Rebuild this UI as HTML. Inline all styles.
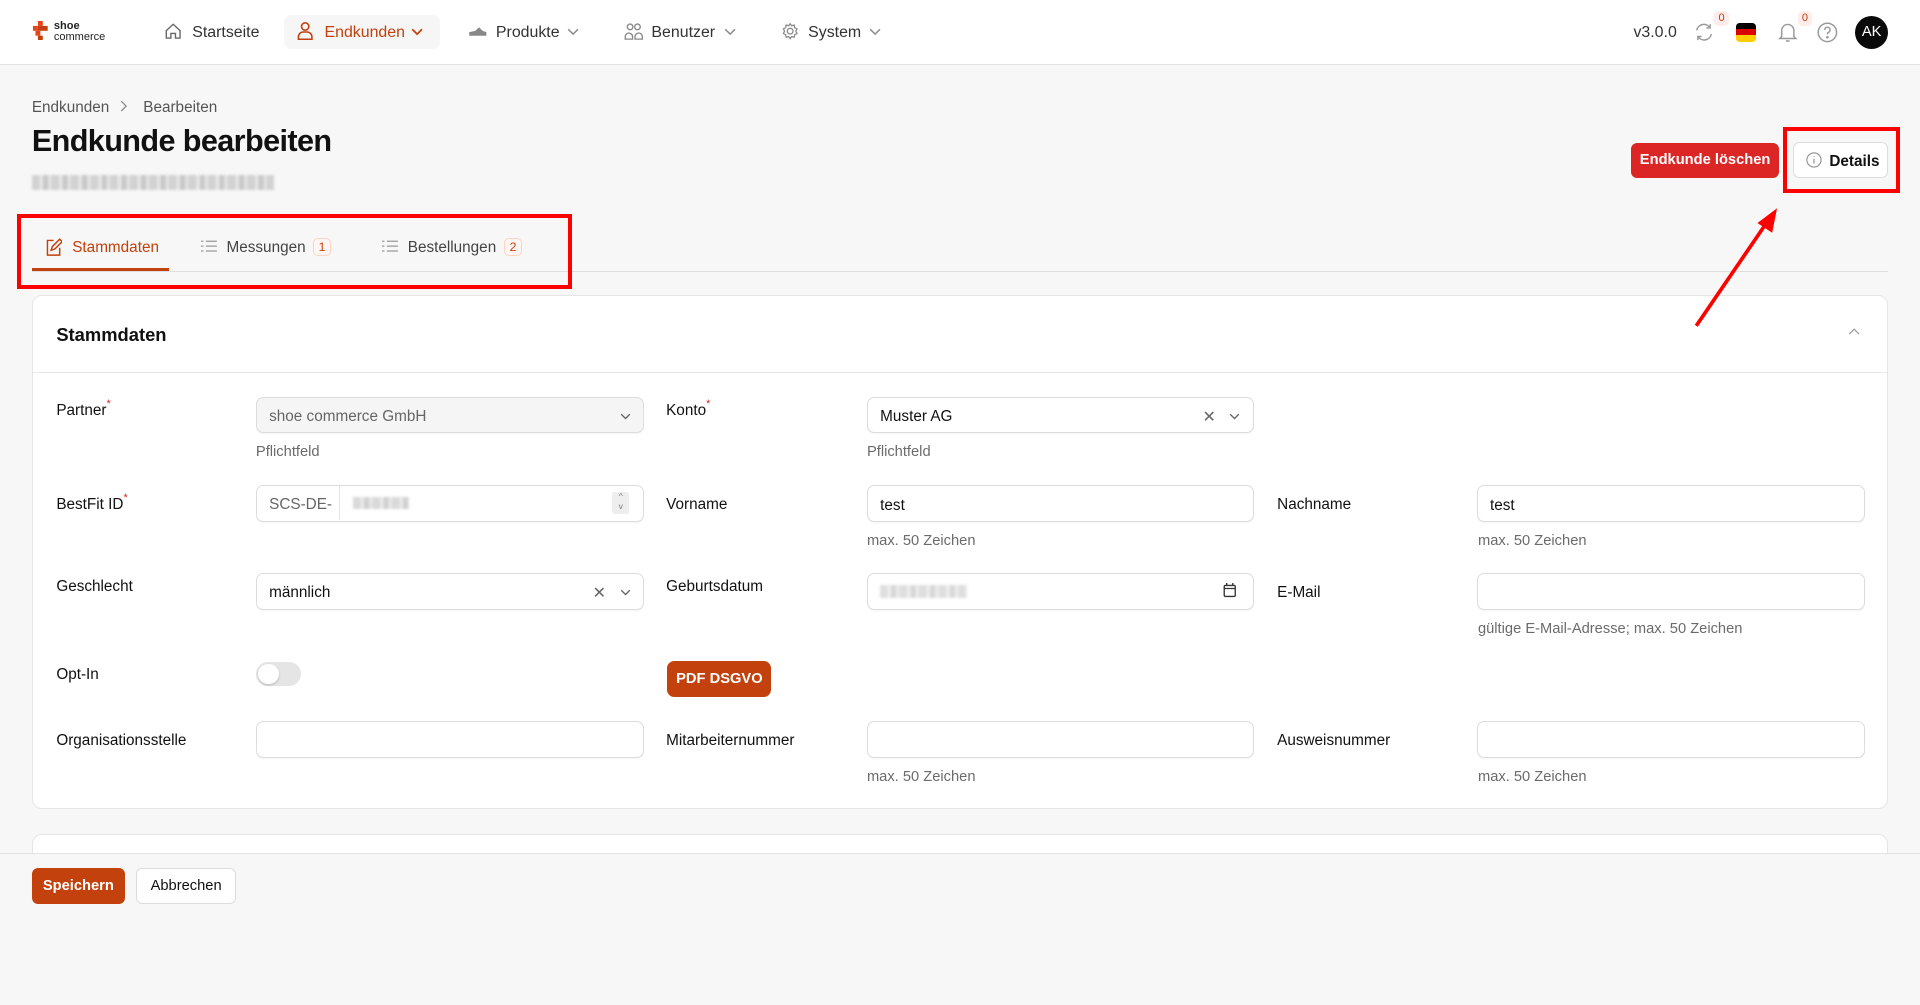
<!DOCTYPE html>
<html><head><meta charset="utf-8">
<style>
html,body{margin:0;padding:0;width:1920px;height:1005px;overflow:hidden;background:#f7f7f7;}
#r{zoom:1.22449;position:relative;width:1568px;height:821px;font-family:"Liberation Sans",sans-serif;color:#111;font-size:13px;}
.a{position:absolute;}
.hdr{left:0;top:0;width:1568px;height:52px;background:#fff;border-bottom:1px solid #e3e3e3;}
.nav{top:20px;font-size:13px;color:#333;}
.lbl{font-size:12.5px;color:#111;}
.req:after{content:"*";color:#dc2626;font-size:9px;vertical-align:top;position:relative;top:-3px;}
.inp{background:#fff;border:1px solid #dcdcdc;border-radius:6px;height:29px;box-sizing:border-box;box-shadow:0 1px 1px rgba(0,0,0,.03);}
.v{position:absolute;left:10px;top:8px;font-size:12.5px;color:#111;}
.help{font-size:12px;color:#6b6b6b;}
.btn{display:flex;align-items:center;justify-content:center;box-sizing:border-box;}
.blur{background:repeating-linear-gradient(90deg,#c9c9c9 0 6px,#e2e2e2 6px 9px,#bdbdbd 9px 13px,#ddd 13px 16px);filter:blur(1px);}
</style></head><body><div id="r">
<div class="a hdr"></div>
<svg class="a" style="left:27px;top:17px" width="14" height="16" viewBox="0 0 14 16"><rect x="4" y="0" width="4" height="4" fill="#e8431b"/><rect x="0" y="4" width="4" height="4" fill="#e8431b"/><rect x="4" y="4" width="8" height="4" fill="#c2410c"/><rect x="2" y="8" width="4" height="4" fill="#e8431b"/><rect x="4" y="12" width="4" height="4" fill="#c2410c"/></svg>
<div class="a" style="left:44px;top:17px;font-size:9px;line-height:9px;color:#222"><b>shoe</b><br>commerce</div>
<svg class="a" style="left:134px;top:18px" width="15" height="15" viewBox="0 0 16 16" fill="none" stroke="#666" stroke-width="1.2"><path d="M2 7.5L8 2l6 5.5V14H10V10H6v4H2z"/></svg>
<div class="a nav" style="left:157px">Startseite</div>
<div class="a" style="left:232px;top:12px;width:127px;height:28px;background:#f6f6f6;border-radius:6px"></div>
<svg class="a" style="left:242px;top:17px" width="15" height="16" viewBox="0 0 15 16" fill="none" stroke="#c2410c" stroke-width="1.3"><circle cx="7.5" cy="4.5" r="3"/><path d="M2 15v-2a4 4 0 0 1 4-4h3a4 4 0 0 1 4 4v2z"/></svg>
<div class="a nav" style="left:265px;color:#c2410c">Endkunden</div>
<svg class="a" style="left:336px;top:23px" width="10" height="7" viewBox="0 0 10 7" fill="none" stroke="#c2410c" stroke-width="1.4"><path d="M1 1l4 4 4-4"/></svg>
<svg class="a" style="left:382px;top:21px" width="16" height="9" viewBox="0 0 16 9"><path d="M1 8V5l5-1 3-3 3 3 3 1v3z" fill="#888"/></svg>
<div class="a nav" style="left:405px">Produkte</div>
<svg class="a" style="left:463px;top:23px" width="10" height="7" viewBox="0 0 10 7" fill="none" stroke="#888" stroke-width="1.2"><path d="M1 1l4 4 4-4"/></svg>
<svg class="a" style="left:510px;top:18px" width="16" height="16" viewBox="0 0 16 16" fill="none" stroke="#888" stroke-width="1.1"><circle cx="5" cy="4" r="2.3"/><circle cx="11" cy="4" r="2.3"/><path d="M1 14v-2a3 3 0 0 1 6 0v2zM9 14v-2a3 3 0 0 1 6 0v2z"/></svg>
<div class="a nav" style="left:532px">Benutzer</div>
<svg class="a" style="left:591px;top:23px" width="10" height="7" viewBox="0 0 10 7" fill="none" stroke="#888" stroke-width="1.2"><path d="M1 1l4 4 4-4"/></svg>
<svg class="a" style="left:638px;top:18px" width="15" height="15" viewBox="0 0 16 16" fill="none" stroke="#888" stroke-width="1.1"><circle cx="8" cy="8" r="2.5"/><path d="M8 1.5l1.3 1.8 2.2-.6.4 2.2 2 1.1-1 2 1 2-2 1.1-.4 2.2-2.2-.6L8 14.5l-1.3-1.8-2.2.6-.4-2.2-2-1.1 1-2-1-2 2-1.1.4-2.2 2.2.6z"/></svg>
<div class="a nav" style="left:660px">System</div>
<svg class="a" style="left:710px;top:23px" width="10" height="7" viewBox="0 0 10 7" fill="none" stroke="#888" stroke-width="1.2"><path d="M1 1l4 4 4-4"/></svg>
<div class="a" style="left:1334px;top:20px;font-size:13px;color:#333">v3.0.0</div>
<svg class="a" style="left:1383px;top:19px" width="18" height="15" viewBox="0 0 18 15" fill="none" stroke="#999" stroke-width="1.2"><path d="M3 6a6 6 0 0 1 11-2M15 9a6 6 0 0 1-11 2M14 1v3h-3M4 14v-3h3"/></svg>
<div class="a btn" style="left:1400px;top:9px;width:12px;height:12px;border-radius:4px;background:#fdecea;color:#c2410c;font-size:9px">0</div>
<div class="a" style="left:1418px;top:19px;width:16px;height:15px;border-radius:3px;overflow:hidden"><div style="height:5px;background:#000"></div><div style="height:5px;background:#dd0000"></div><div style="height:5px;background:#ffce00"></div></div>
<svg class="a" style="left:1452px;top:18px" width="16" height="17" viewBox="0 0 16 17" fill="none" stroke="#999" stroke-width="1.2"><path d="M3 12V7a5 5 0 0 1 10 0v5l1.5 1.5h-13zM6.5 15.5h3"/></svg>
<div class="a btn" style="left:1468px;top:9px;width:12px;height:12px;border-radius:4px;background:#fdecea;color:#c2410c;font-size:9px">0</div>
<svg class="a" style="left:1484px;top:18px" width="17" height="17" viewBox="0 0 17 17" fill="none" stroke="#999" stroke-width="1.2"><circle cx="8.5" cy="8.5" r="7.5"/><path d="M6.3 6.5a2.2 2.2 0 1 1 3 2c-.7.3-.8.8-.8 1.5"/><circle cx="8.5" cy="12.5" r=".5" fill="#999"/></svg>
<div class="a btn" style="left:1515px;top:13px;width:27px;height:27px;border-radius:50%;background:#0a0a0a;color:#fff;font-size:12px">AK</div>
<div class="a" style="left:26px;top:81px;font-size:12.5px;color:#555">Endkunden</div>
<svg class="a" style="left:98px;top:82px" width="6" height="10" viewBox="0 0 6 10" fill="none" stroke="#888" stroke-width="1"><path d="M1 1l4 4-4 4"/></svg>
<div class="a" style="left:117px;top:81px;font-size:12.5px;color:#555">Bearbeiten</div>
<div class="a" style="left:26px;top:101px;font-size:25px;font-weight:bold;letter-spacing:-.5px">Endkunde bearbeiten</div>
<div class="a blur" style="left:26px;top:143px;width:198px;height:12px;opacity:.8"></div>
<div class="a btn" style="left:1332px;top:117px;width:121px;height:28px;background:#dc2626;border-radius:5px;color:#fff;font-weight:bold;font-size:12px">Endkunde löschen</div>
<div class="a" style="left:1464px;top:116px;width:78px;height:29px;background:#fff;border:1px solid #ddd;border-radius:5px;box-sizing:border-box"></div>
<svg class="a" style="left:1475px;top:124px" width="13" height="13" viewBox="0 0 13 13" fill="none" stroke="#999" stroke-width="1"><circle cx="6.5" cy="6.5" r="5.8"/><path d="M6.5 5.5v4M6.5 3.5v.6"/></svg>
<div class="a" style="left:1494px;top:125px;font-size:12.5px;font-weight:bold;color:#111">Details</div>
<div class="a" style="left:26px;top:221px;width:1516px;height:1px;background:#dedede"></div>
<div class="a" style="left:26px;top:219px;width:112px;height:2px;background:#c2410c"></div>
<svg class="a" style="left:37px;top:194px" width="14" height="15" viewBox="0 0 14 15" fill="none" stroke="#c2410c" stroke-width="1.2"><path d="M7 2H2v12h10V8M5 10l1-3 6-6 2 2-6 6z"/></svg>
<div class="a" style="left:59px;top:195px;font-size:12.5px;color:#c2410c">Stammdaten</div>
<svg class="a" style="left:164px;top:196px" width="13" height="10" viewBox="0 0 13 10" stroke="#999" stroke-width="1"><path d="M0 1h2M4 1h9M0 5h2M4 5h9M0 9h2M4 9h9"/></svg>
<div class="a" style="left:185px;top:195px;font-size:12.5px;color:#444">Messungen</div>
<div class="a btn" style="left:256px;top:194px;width:14px;height:15px;border:1px solid #fad4c8;background:#fff5f2;border-radius:4px;color:#c2410c;font-size:10px">1</div>
<svg class="a" style="left:312px;top:196px" width="13" height="10" viewBox="0 0 13 10" stroke="#999" stroke-width="1"><path d="M0 1h2M4 1h9M0 5h2M4 5h9M0 9h2M4 9h9"/></svg>
<div class="a" style="left:333px;top:195px;font-size:12.5px;color:#444">Bestellungen</div>
<div class="a btn" style="left:412px;top:194px;width:14px;height:15px;border:1px solid #fad4c8;background:#fff5f2;border-radius:4px;color:#c2410c;font-size:10px">2</div>
<div class="a" style="left:26px;top:241px;width:1516px;height:420px;background:#fff;border:1px solid #e5e5e5;border-radius:8px;box-sizing:border-box"></div>
<div class="a" style="left:46px;top:265px;font-size:15px;font-weight:bold">Stammdaten</div>
<svg class="a" style="left:1509px;top:268px" width="10" height="6" viewBox="0 0 10 6" fill="none" stroke="#999" stroke-width="1"><path d="M1 5l4-4 4 4"/></svg>
<div class="a" style="left:27px;top:304px;width:1514px;height:1px;background:#e8e8e8"></div>
<div class="a lbl req" style="left:46px;top:328px">Partner</div>
<div class="a inp" style="left:209px;top:324px;width:317px;height:30px;background:#f5f5f5"><span class="v" style="color:#666">shoe commerce GmbH</span></div>
<svg class="a" style="left:506px;top:337px" width="9" height="6" viewBox="0 0 9 6" fill="none" stroke="#666" stroke-width="1.1"><path d="M1 1l3.5 3.5L8 1"/></svg>
<div class="a help" style="left:209px;top:363px">Pflichtfeld</div>
<div class="a lbl req" style="left:544px;top:328px">Konto</div>
<div class="a inp" style="left:708px;top:324px;width:316px;height:30px"><span class="v">Muster AG</span></div>
<div class="a" style="left:982px;top:332px;font-size:13px;color:#666">✕</div>
<svg class="a" style="left:1004px;top:337px" width="9" height="6" viewBox="0 0 9 6" fill="none" stroke="#666" stroke-width="1.1"><path d="M1 1l3.5 3.5L8 1"/></svg>
<div class="a help" style="left:708px;top:363px">Pflichtfeld</div>
<div class="a lbl req" style="left:46px;top:405px">BestFit ID</div>
<div class="a inp" style="left:209px;top:396px;width:317px;height:30px"><span class="v" style="color:#666">SCS-DE-</span></div>
<div class="a" style="left:277px;top:397px;width:1px;height:28px;background:#e3e3e3"></div>
<div class="a blur" style="left:288px;top:406px;width:46px;height:10px;opacity:.7"></div>
<div class="a" style="left:500px;top:402px;width:14px;height:18px;background:#eee;border-radius:2px;font-size:7px;color:#777;text-align:center;line-height:8px">^<br>v</div>
<div class="a lbl" style="left:544px;top:405px">Vorname</div>
<div class="a inp" style="left:708px;top:396px;width:316px;height:30px"><span class="v" style="top:9px">test</span></div>
<div class="a help" style="left:708px;top:435px">max. 50 Zeichen</div>
<div class="a lbl" style="left:1043px;top:405px">Nachname</div>
<div class="a inp" style="left:1206px;top:396px;width:317px;height:30px"><span class="v" style="top:9px">test</span></div>
<div class="a help" style="left:1207px;top:435px">max. 50 Zeichen</div>
<div class="a lbl" style="left:46px;top:472px">Geschlecht</div>
<div class="a inp" style="left:209px;top:468px;width:317px;height:30px"><span class="v">männlich</span></div>
<div class="a" style="left:484px;top:476px;font-size:13px;color:#666">✕</div>
<svg class="a" style="left:506px;top:481px" width="9" height="6" viewBox="0 0 9 6" fill="none" stroke="#666" stroke-width="1.1"><path d="M1 1l3.5 3.5L8 1"/></svg>
<div class="a lbl" style="left:544px;top:472px">Geburtsdatum</div>
<div class="a inp" style="left:708px;top:468px;width:316px;height:30px"></div>
<div class="a blur" style="left:719px;top:478px;width:71px;height:10px;opacity:.6"></div>
<svg class="a" style="left:999px;top:476px" width="11" height="12" viewBox="0 0 11 12" fill="none" stroke="#333" stroke-width="1.1"><rect x="1" y="2" width="9" height="9" rx="1"/><path d="M1 4.5h9M3 0v2M8 0v2"/></svg>
<div class="a lbl" style="left:1043px;top:477px">E-Mail</div>
<div class="a inp" style="left:1206px;top:468px;width:317px;height:30px"></div>
<div class="a help" style="left:1207px;top:507px">gültige E-Mail-Adresse; max. 50 Zeichen</div>
<div class="a lbl" style="left:46px;top:544px">Opt-In</div>
<div class="a" style="left:209px;top:541px;width:37px;height:19px;border-radius:10px;background:#e5e5e5"></div>
<div class="a" style="left:211px;top:542px;width:17px;height:17px;border-radius:50%;background:#fff;box-shadow:0 1px 2px rgba(0,0,0,.2)"></div>
<div class="a btn" style="left:545px;top:540px;width:85px;height:29px;background:#c2410c;border-radius:6px;color:#fff;font-weight:bold;font-size:12px">PDF DSGVO</div>
<div class="a lbl" style="left:46px;top:598px">Organisationsstelle</div>
<div class="a inp" style="left:209px;top:589px;width:317px;height:30px"></div>
<div class="a lbl" style="left:544px;top:598px">Mitarbeiternummer</div>
<div class="a inp" style="left:708px;top:589px;width:316px;height:30px"></div>
<div class="a help" style="left:708px;top:628px">max. 50 Zeichen</div>
<div class="a lbl" style="left:1043px;top:598px">Ausweisnummer</div>
<div class="a inp" style="left:1206px;top:589px;width:317px;height:30px"></div>
<div class="a help" style="left:1207px;top:628px">max. 50 Zeichen</div>
<div class="a" style="left:26px;top:681px;width:1516px;height:30px;background:#fff;border:1px solid #e5e5e5;border-radius:8px;box-sizing:border-box"></div>
<div class="a" style="left:0;top:697px;width:1568px;height:124px;background:#f7f7f7;border-top:1px solid #e3e3e3"></div>
<div class="a btn" style="left:26px;top:709px;width:76px;height:29px;background:#c2410c;border-radius:5px;color:#fff;font-weight:bold;font-size:12px">Speichern</div>
<div class="a btn" style="left:111px;top:709px;width:82px;height:29px;background:#fff;border:1px solid #dcdcdc;border-radius:5px;color:#111;font-size:12px">Abbrechen</div>
<div class="a" style="left:14px;top:175px;width:453px;height:61px;border:4px solid #ff0000;box-sizing:border-box"></div>
<div class="a" style="left:1456px;top:104px;width:96px;height:54px;border:4px solid #ff0000;box-sizing:border-box"></div>
<svg class="a" style="left:1375px;top:160px" width="90" height="115" viewBox="0 0 90 115"><line x1="10" y1="106" x2="66" y2="24" stroke="#ff0000" stroke-width="3"/><path d="M76 10L60 22l12 8z" fill="#ff0000"/></svg>
</div></body></html>
